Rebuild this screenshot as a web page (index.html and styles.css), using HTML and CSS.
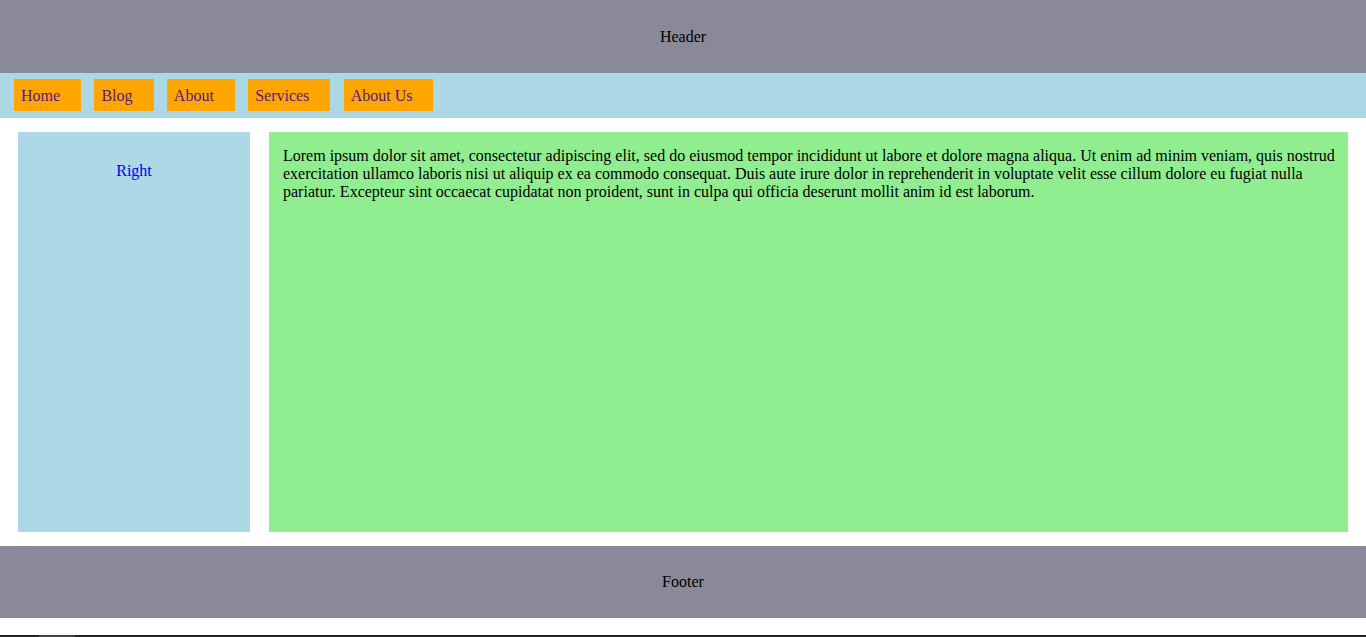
FILE: index.html
```html
<!DOCTYPE html>
<html>
<head>
<meta charset="utf-8">
<title>Layout</title>
<link rel="stylesheet" href="styles.css">
</head>
<body>
<header class="site-header">Header</header>
<nav class="site-nav">
  <a class="nav-item" href="#">Home</a>
  <a class="nav-item" href="#">Blog</a>
  <a class="nav-item" href="#">About</a>
  <a class="nav-item" href="#">Services</a>
  <a class="nav-item" href="#">About Us</a>
</nav>
<main class="site-main">
  <aside class="side">Right</aside>
  <section class="content">Lorem ipsum dolor sit amet, consectetur adipiscing elit, sed do eiusmod tempor incididunt ut labore et dolore magna aliqua. Ut enim ad minim veniam, quis nostrud exercitation ullamco laboris nisi ut aliquip ex ea commodo consequat. Duis aute irure dolor in reprehenderit in voluptate velit esse cillum dolore eu fugiat nulla pariatur. Excepteur sint occaecat cupidatat non proident, sunt in culpa qui officia deserunt mollit anim id est laborum.</section>
</main>
<footer class="site-footer">Footer</footer>
<div class="bottom-bar"><span class="bottom-thumb"></span></div>
</body>
</html>
```

FILE: styles.css
```css
html, body {
  margin: 0;
  padding: 0;
}
body {
  font-family: "Liberation Serif", "Times New Roman", serif;
  font-size: 16px;
  line-height: 18px;
  color: #000;
  background: #fff;
  height: 637px;
  display: flex;
  flex-direction: column;
  overflow: hidden;
}
.site-header {
  height: 73px;
  background: #8a8999;
  display: flex;
  align-items: center;
  justify-content: center;
}
.site-nav {
  height: 45px;
  box-sizing: border-box;
  background: #add8e6;
  padding: 6px 14px 7px;
  display: flex;
  gap: 13.3px;
}
.nav-item {
  display: block;
  height: 32px;
  box-sizing: border-box;
  padding: 8px 21px 6px 7px;
  background: #ffa500;
  color: #551a8b;
  text-decoration: none;
}
.site-main {
  display: flex;
  gap: 19px;
  padding: 14px 18px;
}
.side {
  width: 232px;
  height: 400px;
  flex: none;
  box-sizing: border-box;
  padding-top: 30px;
  background: #add8e6;
  color: #0000ee;
  text-align: center;
}
.content {
  flex: 1;
  height: 400px;
  box-sizing: border-box;
  padding: 15px 10px 14px 14px;
  background: #90ee90;
}
.site-footer {
  height: 72px;
  background: #8a8999;
  display: flex;
  align-items: center;
  justify-content: center;
}
.bottom-bar {
  margin-top: auto;
  height: 2px;
  background: #222222;
  display: flex;
  padding-left: 39px;
}
.bottom-thumb {
  width: 36px;
  background: #444444;
}
```
